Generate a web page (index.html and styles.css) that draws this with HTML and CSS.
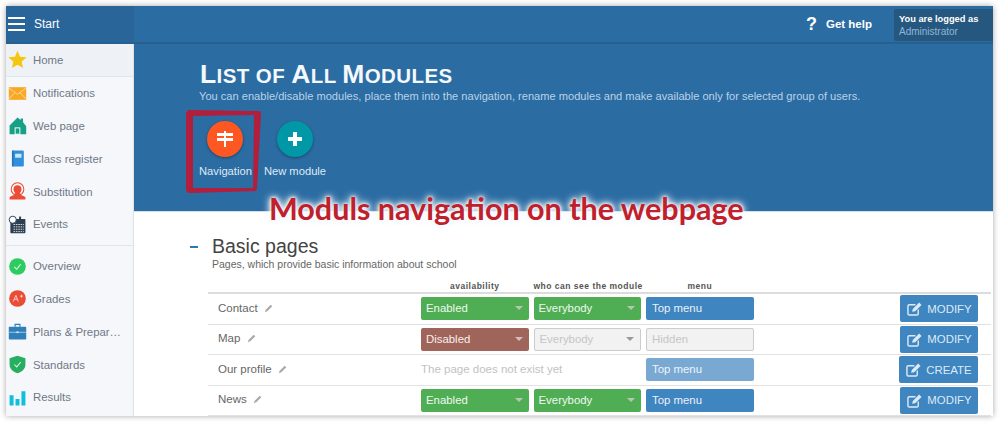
FILE: index.html
```html
<!DOCTYPE html>
<html lang="en">
<head>
<meta charset="utf-8">
<title>List of all modules</title>
<link rel="stylesheet" href="styles.css">
</head>
<body>
<div class="window">
  <header class="topbar">
    <div class="start">
      <span class="burger"><i></i><i></i><i></i></span>
      <span>Start</span>
    </div>
    <div class="top-right">
      <span class="qmark">?</span>
      <span class="help">Get help</span>
      <div class="logged">
        <strong>You are logged as</strong>
        <span>Administrator</span>
      </div>
    </div>
  </header>
  <div class="body">
    <nav class="side">
      <a class="item active">
        <svg class="ic" viewBox="0 0 24 24"><path fill="#f5c60f" d="M12 1l3.2 7.6 8.3.7-6.3 5.4 1.9 8.1-7.100-4.300-7.100 4.300 1.900-8.100-6.300-5.400 8.300-.7z"/></svg>
        <span>Home</span>
      </a>
      <a class="item">
        <svg class="ic" viewBox="0 0 24 24"><rect x="1" y="4" width="22" height="16" fill="#f9a825"/><path fill="none" stroke="#fde3b0" stroke-width="1" d="M1 5l11 8 11-8M1 19l8-8.500M23 19l-8-8.500"/></svg>
        <span>Notifications</span>
      </a>
      <a class="item">
        <svg class="ic" viewBox="0 0 24 24"><path fill="#17a085" d="M12 2l4 3V3h3v5l4 5v10H2V12z"/><rect x="9" y="15" width="6" height="8" fill="none" stroke="#fff" stroke-width="1.200"/></svg>
        <span>Web page</span>
      </a>
      <a class="item">
        <svg class="ic" viewBox="0 0 24 24"><rect x="5" y="2" width="15" height="20" rx="1.500" fill="#2f8fdc"/><rect x="5" y="2" width="2" height="20" fill="#2475b8"/><rect x="9" y="6" width="8" height="5" fill="#cfe6f8"/></svg>
        <span>Class register</span>
      </a>
      <a class="item">
        <svg class="ic" viewBox="0 0 24 24"><circle cx="12" cy="9" r="8" fill="none" stroke="#ea4c36" stroke-width="1.300"/><circle cx="12" cy="9" r="5" fill="#ea4c36"/><path fill="#ea4c36" d="M9 13h6l1 3 6 3v3H2v-3l6-3z"/></svg>
        <span>Substitution</span>
      </a>
      <a class="item">
        <svg class="ic" viewBox="0 0 24 24"><rect x="3" y="5" width="19" height="18" rx="1" fill="#2c3e50"/><rect x="14" y="2" width="2.500" height="5" fill="#2c3e50"/><path stroke="#fff" stroke-width="1" stroke-dasharray="2 1" d="M7 12h13M7 15h13M7 18h13M7 21h13"/><circle cx="6" cy="6" r="4.500" fill="#fff" stroke="#2c3e50" stroke-width="1.200"/></svg>
        <span>Events</span>
      </a>
      <hr class="sep">
      <a class="item">
        <svg class="ic" viewBox="0 0 24 24"><circle cx="12" cy="12" r="10.500" fill="#2ecc60"/><path fill="none" stroke="#d8f7e2" stroke-width="1.300" d="M8 12.500l3 3 5-6.500"/></svg>
        <span>Overview</span>
      </a>
      <a class="item">
        <svg class="ic" viewBox="0 0 24 24"><circle cx="12" cy="12" r="10.500" fill="#ea4c36"/><path fill="none" stroke="#f9cfc8" stroke-width="1.200" d="M6.500 16L10 8l3 8M8 13h4M15 9h4M17 7v4"/></svg>
        <span>Grades</span>
      </a>
      <a class="item">
        <svg class="ic" viewBox="0 0 24 24"><rect x="1" y="6" width="22" height="16" rx="1" fill="#2e7fba"/><path fill="none" stroke="#2e7fba" stroke-width="1.500" d="M9 6V3h6v3"/><path stroke="#b7d6ec" stroke-width="1" d="M1 13h22"/><rect x="10.500" y="12" width="3" height="2" fill="#dbeaf5"/></svg>
        <span>Plans &amp; Prepar…</span>
      </a>
      <a class="item">
        <svg class="ic" viewBox="0 0 24 24"><path fill="#27ae60" d="M12 1l10 3v8c0 6-5 9.500-10 11C7 21.500 2 18 2 12V4z"/><path fill="none" stroke="#d8f7e2" stroke-width="1.300" d="M8 12l3 3 5-6"/></svg>
        <span>Standards</span>
      </a>
      <a class="item">
        <svg class="ic" viewBox="0 0 24 24"><path fill="#10bfdc" d="M2 9h5v13H2zM9.500 14h5v8h-5zM17 4h5v18h-5z"/></svg>
        <span>Results</span>
      </a>
    </nav>
    <main class="main">
      <section class="hero">
        <h1 class="title"><span class="cap">L</span>IST OF <span class="cap">A</span>LL <span class="cap">M</span>ODULES</h1>
        <p class="sub">You can enable/disable modules, place them into the navigation, rename modules and make available only for selected group of users.</p>
        <div class="actions">
          <div class="action">
            <span class="disc orange">
              <svg viewBox="0 0 20 20" width="20" height="20"><path fill="#fff" d="M9 2h2v2h7v3H11v2h7v3h-7v6H9v-6H2V9h7V7H2V4h7z"/></svg>
            </span>
            <span class="lbl">Navigation</span>
          </div>
          <div class="action">
            <span class="disc teal">
              <svg viewBox="0 0 20 20" width="20" height="20"><path fill="#fff" d="M8 3h4v5h5v4h-5v5H8v-5H3V8h5z"/></svg>
            </span>
            <span class="lbl">New module</span>
          </div>
        </div>
      </section>
      <section class="content">
        <div class="sec-head">
          <span class="minus"></span>
          <div>
            <h2 class="sec-title">Basic pages</h2>
            <p class="sec-desc">Pages, which provide basic information about school</p>
          </div>
        </div>
        <div class="table">
          <div class="row labels">
            <span></span>
            <span class="th">availability</span>
            <span class="th">who can see the module</span>
            <span class="th">menu</span>
            <span></span>
          </div>
          <div class="row">
            <span class="name">Contact <svg class="pen" viewBox="0 0 12 12"><path d="M1 11l1-3 6-6 2 2-6 6z"/></svg></span>
            <span class="sel green">Enabled<i class="caret"></i></span>
            <span class="sel green">Everybody<i class="caret"></i></span>
            <span class="sel blue">Top menu</span>
            <a class="btn"><svg class="edit" viewBox="0 0 18 16"><path fill="none" stroke="currentColor" stroke-width="1.500" d="M13 9v4.500a1.500 1.500 0 0 1-1.500 1.500h-8A1.500 1.500 0 0 1 2 13.500v-8A1.500 1.500 0 0 1 3.500 4H10"/><path fill="currentColor" d="M6.500 11.500l.7-3L14 1.700l2.500 2.500-6.800 6.700z"/></svg>MODIFY</a>
          </div>
          <div class="row">
            <span class="name">Map <svg class="pen" viewBox="0 0 12 12"><path d="M1 11l1-3 6-6 2 2-6 6z"/></svg></span>
            <span class="sel brown">Disabled<i class="caret"></i></span>
            <span class="sel off">Everybody<i class="caret"></i></span>
            <span class="sel off">Hidden</span>
            <a class="btn"><svg class="edit" viewBox="0 0 18 16"><path fill="none" stroke="currentColor" stroke-width="1.500" d="M13 9v4.500a1.500 1.500 0 0 1-1.500 1.500h-8A1.500 1.500 0 0 1 2 13.500v-8A1.500 1.500 0 0 1 3.500 4H10"/><path fill="currentColor" d="M6.500 11.500l.7-3L14 1.700l2.500 2.500-6.800 6.700z"/></svg>MODIFY</a>
          </div>
          <div class="row">
            <span class="name">Our profile <svg class="pen" viewBox="0 0 12 12"><path d="M1 11l1-3 6-6 2 2-6 6z"/></svg></span>
            <span class="none">The page does not exist yet</span>
            <span class="sel pale">Top menu</span>
            <a class="btn wide"><svg class="edit" viewBox="0 0 18 16"><path fill="none" stroke="currentColor" stroke-width="1.500" d="M13 9v4.500a1.500 1.500 0 0 1-1.500 1.500h-8A1.500 1.500 0 0 1 2 13.500v-8A1.500 1.500 0 0 1 3.500 4H10"/><path fill="currentColor" d="M6.500 11.500l.7-3L14 1.700l2.500 2.500-6.800 6.700z"/></svg>CREATE</a>
          </div>
          <div class="row">
            <span class="name">News <svg class="pen" viewBox="0 0 12 12"><path d="M1 11l1-3 6-6 2 2-6 6z"/></svg></span>
            <span class="sel green">Enabled<i class="caret"></i></span>
            <span class="sel green">Everybody<i class="caret"></i></span>
            <span class="sel blue">Top menu</span>
            <a class="btn"><svg class="edit" viewBox="0 0 18 16"><path fill="none" stroke="currentColor" stroke-width="1.500" d="M13 9v4.500a1.500 1.500 0 0 1-1.500 1.500h-8A1.500 1.500 0 0 1 2 13.500v-8A1.500 1.500 0 0 1 3.500 4H10"/><path fill="currentColor" d="M6.500 11.500l.7-3L14 1.700l2.500 2.500-6.800 6.700z"/></svg>MODIFY</a>
          </div>
        </div>
      </section>
    </main>
  </div>
  <svg class="frame" viewBox="0 0 76 84" width="76" height="84"><path fill="#b11f3c" fill-rule="evenodd" d="M2 0L74 1L75 3L71 79L70 81L6 83L2 83L0 80L0 3ZM7 6L7 78L67 78L68 5Z"/></svg>
  <div class="note">Moduls navigation on the webpage</div>
</div>
</body>
</html>
```
FILE: styles.css
```css
* { box-sizing: border-box; }
html, body { margin: 0; padding: 0; }
body {
  width: 1000px;
  height: 423px;
  background: #fff;
  overflow: hidden;
  font-family: "Liberation Sans", Arial, sans-serif;
  font-size: 12px;
  padding: 6px 7px 7px 6px;
}
.window {
  position: relative;
  width: 987px;
  height: 410px;
  box-shadow: 0 0 6px rgba(0, 0, 0, .35);
  display: flex;
  flex-direction: column;
  overflow: hidden;
  background: #fff;
}
.topbar {
  height: 38px;
  flex: none;
  background: #2b6ca3;
  border-bottom: 2px solid #25608f;
  display: flex;
  justify-content: space-between;
  color: #fff;
}
.start {
  width: 128px;
  display: flex;
  align-items: center;
  gap: 9px;
  padding-left: 2px;
  background: #296598;
  font-size: 12px;
  height: 38px;
  border-bottom: 2px solid #25608f;
}
.burger {
  width: 17px;
  display: flex;
  flex-direction: column;
  gap: 4px;
}
.burger i { height: 2px; background: #fff; display: block; }
.top-right { display: flex; align-items: center; }
.qmark { font-size: 18px; font-weight: bold; margin-right: 9px; }
.help { font-size: 11.500px; font-weight: bold; margin-right: 22px; }
.logged {
  width: 99px;
  height: 32px;
  align-self: flex-start;
  margin-top: 3px;
  background: #26587f;
  border-radius: 2px 0 0 2px;
  padding: 4px 5px;
  display: flex;
  flex-direction: column;
  gap: 1px;
  font-size: 9.300px;
  line-height: 12px;
}
.logged span { color: #8fb6d8; font-size: 10px; }
.body { flex: 1; display: flex; min-height: 0; }
.side {
  width: 128px;
  flex: none;
  background: #f5f7fa;
  border-right: 1px solid #dfe3e6;
  box-shadow: inset 0 2px 2px -1px rgba(0,0,0,.25);
}
.item {
  height: 32.800px;
  display: flex;
  align-items: center;
  gap: 6px;
  padding-left: 2px;
  color: #6f7787;
  font-size: 11.400px;
  white-space: nowrap;
}
.item.active {
  background: #eef2f6;
  border-bottom: 1px solid #dce8ee;
}
.ic { width: 19px; height: 19px; flex: none; }
.sep {
  border: 0;
  border-top: 1px solid #e1e4e8;
  margin: 4px 0;
}
.main { flex: 1; min-width: 0; display: flex; flex-direction: column; }
.hero {
  height: 168px;
  flex: none;
  background: #2b6ca3;
  padding: 18px 0 0 66px;
  color: #fff;
  border-bottom: 1px solid #d5dfe8;
}
.title {
  margin: 0;
  font-size: 20.500px;
  line-height: 25px;
  font-weight: bold;
  color: #f4f8fb;
  letter-spacing: .4px;
}
.title .cap { font-size: 26.500px; }
.sub {
  margin: 1px 0 0 -1px;
  font-size: 11.100px;
  line-height: 14px;
  color: #b9d3e8;
}
.actions { display: flex; gap: 12px; margin: 18px 0 0 -1px; }
.action {
  display: flex;
  flex-direction: column;
  align-items: center;
  gap: 7px;
  color: #dfeaf4;
  font-size: 11.200px;
}
.lbl { line-height: 14px; }
.disc {
  width: 36px;
  height: 36px;
  border-radius: 50%;
  display: flex;
  align-items: center;
  justify-content: center;
  box-shadow: 0 1px 3px rgba(0, 0, 0, .35);
}
.orange { background: #ff5722; }
.teal { background: #0097a7; }
.content { flex: 1; position: relative; padding: 24px 2px 0 56px; min-height: 0; }
.sec-head { display: flex; align-items: flex-start; }
.minus {
  width: 8px;
  height: 2px;
  background: #2b7bb3;
  margin-top: 10px;
  margin-right: 14px;
}
.sec-title {
  margin: 0;
  font-size: 19.500px;
  line-height: 20px;
  font-weight: normal;
  color: #444;
}
.sec-desc {
  margin: 2px 0 0;
  font-size: 10.500px;
  line-height: 13px;
  color: #666;
}
.table { margin: 7px 0 0 18px; }
.row {
  display: grid;
  grid-template-columns: 198px 107.500px 107.500px 107.500px 1fr;
  column-gap: 5px;
  align-items: center;
  padding: 0 13px 0 10px;
  height: 30.500px;
  border-bottom: 1px solid #e2e2e2;
}
.row.labels {
  height: 16px;
  border-bottom: 2px solid #dcdcdc;
  align-items: end;
  padding-bottom: 0;
}
.th {
  font-size: 8.500px;
  font-weight: bold;
  letter-spacing: .5px;
  color: #555;
  text-align: center;
  white-space: nowrap;
  line-height: 11px;
}
.name {
  color: #666;
  font-size: 11.500px;
  display: flex;
  align-items: center;
  gap: 3px;
  white-space: pre;
  padding-bottom: 2px;
}
.pen { width: 10px; height: 10px; fill: #aaa; }
.sel {
  height: 23px;
  border-radius: 2px;
  display: flex;
  align-items: center;
  justify-content: space-between;
  padding: 0 6px 1px 5px;
  font-size: 11.400px;
  color: #fff;
  white-space: nowrap;
}
.green { background: #4fae54; color: #f0f8f0; }
.brown { background: #a0655a; color: #f7eeec; }
.blue { background: #3f85c0; color: #eaf2f9; padding-left: 6px; }
.pale { background: #79a9d2; color: #eef4fa; padding-left: 6px; }
.off { background: #f2f2f2; border: 1px solid #ccc; color: #c6c6c6; }
.caret {
  width: 0;
  height: 0;
  border-left: 4px solid transparent;
  border-right: 4px solid transparent;
  border-top: 4px solid #b7c4b7;
}
.off .caret { border-top-color: #999; }
.brown .caret { border-top-color: #cfc0bc; }
.none { grid-column: span 2; color: #c2c2c2; font-size: 11.500px; padding-bottom: 1px; }
.btn {
  justify-self: end;
  width: 78px;
  height: 27px;
  background: #3f85c0;
  border-radius: 2px;
  color: #dcebf7;
  font-size: 11.400px;
  display: flex;
  align-items: center;
  justify-content: center;
  gap: 4px;
}
.btn.wide { width: 79px; }
.edit { width: 17px; height: 15px; flex: none; }
.frame { position: absolute; left: 180px; top: 104px; }
.note {
  position: absolute;
  left: 263px;
  top: 183px;
  font-family: "Lato", sans-serif;
  font-weight: bold;
  font-size: 30.500px;
  line-height: 38px;
  color: #c0202c;
  white-space: nowrap;
  text-shadow: 0 0 3px #fff, 0 0 5px #fff, 0 0 8px #fff, 0 0 10px #d8e8f4;
}
```
